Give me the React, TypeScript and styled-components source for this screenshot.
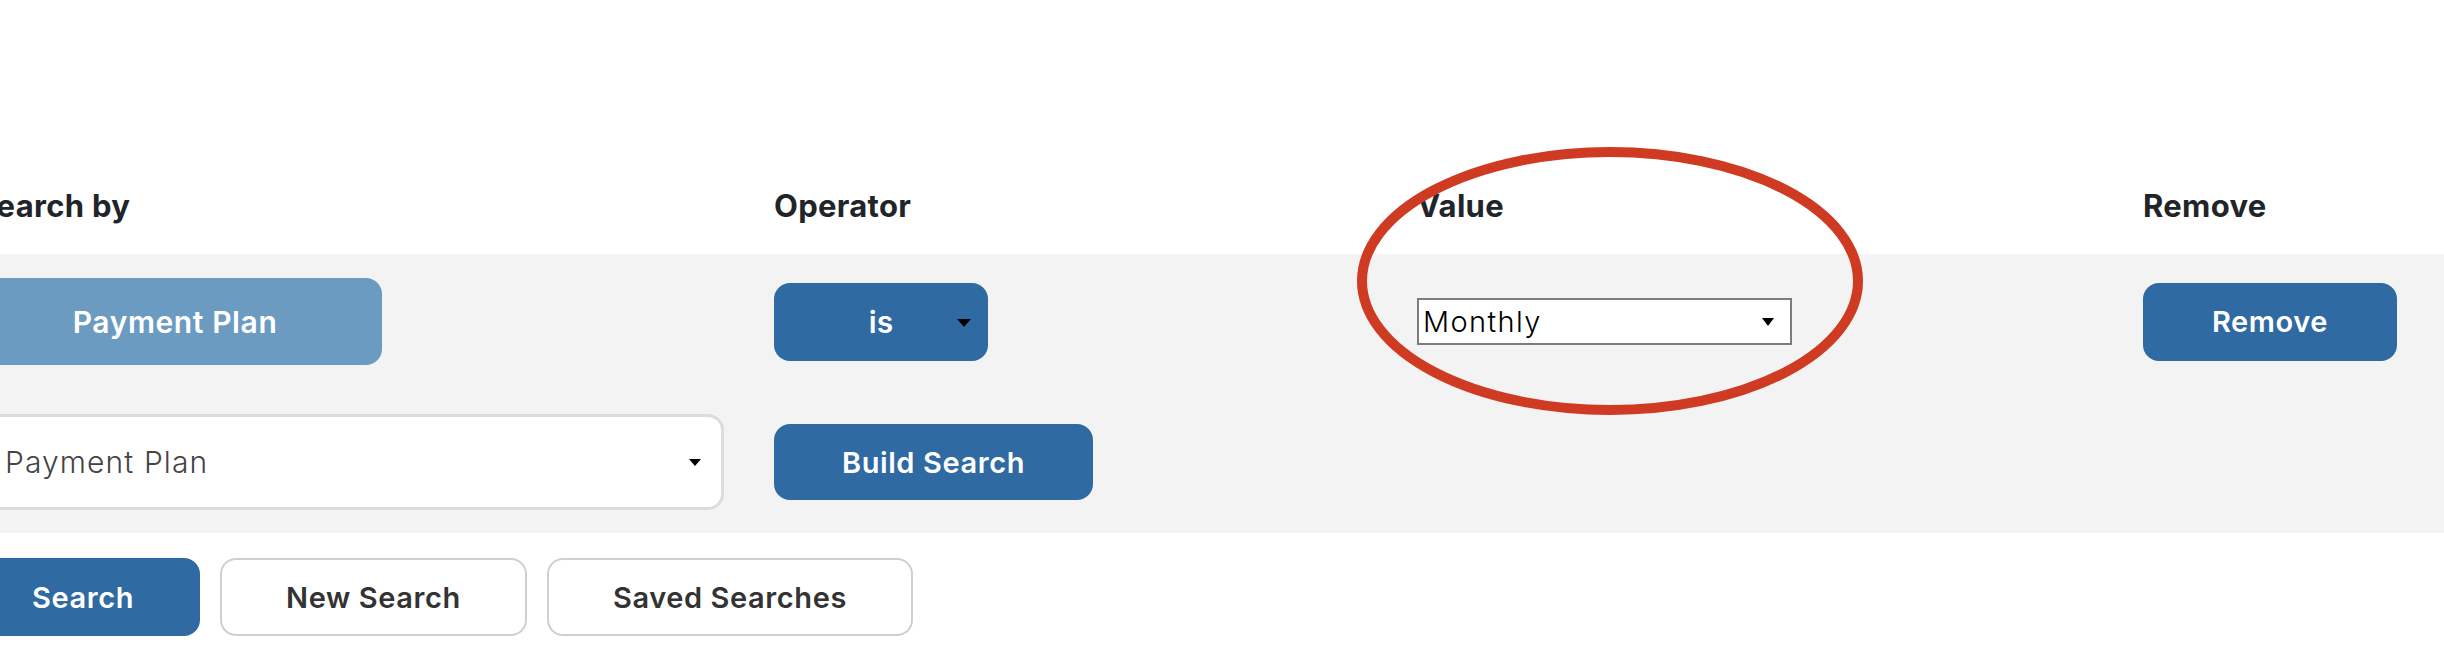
import React from "react";
import styled, { createGlobalStyle } from "styled-components";

const GlobalStyle = createGlobalStyle`
  html, body {
    margin: 0;
    padding: 0;
    background: #ffffff;
    overflow: hidden;
  }
  body {
    font-family: Inter, "Open Sans", "Liberation Sans", sans-serif;
    color: #212529;
  }
`;

const BLUE = "#306aa2";

const Page = styled.div`
  position: relative;
  width: 2444px;
  height: 670px;
  overflow: hidden;
`;

const Table = styled.div`
  margin-left: -32px;
`;

const Grid = styled.div`
  display: grid;
  grid-template-columns: 806px 643px 726px 1fr;
  align-items: center;
`;

const HeaderRow = styled(Grid)`
  height: 254px;
  align-items: end;
  box-sizing: border-box;
  padding-bottom: 33px;
`;

const HeaderCell = styled.div<{ $indent?: number }>`
  font-size: 31px;
  line-height: 31px;
  font-weight: 700;
  letter-spacing: 0.3px;
  color: #212529;
  padding-left: ${(p) => p.$indent ?? 0}px;
`;

const Band = styled.div`
  background: #f3f3f4;
  display: flex;
  flex-direction: column;
  gap: 49px;
  padding: 24px 0 23px;
  width: 2476px;
`;

const Row = styled(Grid)<{ $height: number }>`
  height: ${(p) => p.$height}px;
`;

const Button = styled.button<{ $variant?: "primary" | "muted" | "outline"; $height?: number }>`
  box-sizing: border-box;
  height: ${(p) => p.$height ?? 78}px;
  padding: 0 64px;
  border-radius: 16px;
  border: 2px solid
    ${(p) => (p.$variant === "outline" ? "#cfcfcf" : p.$variant === "muted" ? "#6b9bc0" : BLUE)};
  background: ${(p) => (p.$variant === "outline" ? "#ffffff" : p.$variant === "muted" ? "#6b9bc0" : BLUE)};
  color: ${(p) => (p.$variant === "outline" ? "#333333" : "#ffffff")};
  font-family: Inter, "Open Sans", sans-serif;
  font-size: 29px;
  font-weight: 600;
  letter-spacing: 0.6px;
  cursor: pointer;
  white-space: nowrap;
`;

const FieldButton = styled(Button)`
  width: 414px;
  font-size: 30px;
`;

const Caret = styled.span<{ $size?: number }>`
  width: 0;
  height: 0;
  border-left: ${(p) => (p.$size ?? 13) / 2}px solid transparent;
  border-right: ${(p) => (p.$size ?? 13) / 2}px solid transparent;
  border-top: ${(p) => Math.round((p.$size ?? 13) * 0.58)}px solid #000;
`;

const OperatorSelect = styled.div`
  position: relative;
  box-sizing: border-box;
  width: 214px;
  height: 78px;
  border-radius: 16px;
  background: ${BLUE};
  color: #ffffff;
  font-size: 30px;
  font-weight: 600;
  display: flex;
  align-items: center;
  justify-content: center;
  ${Caret} {
    position: absolute;
    right: 17px;
    top: 36px;
  }
`;

const ValueSelect = styled.div`
  box-sizing: border-box;
  width: 375px;
  height: 47px;
  border: 2px solid #7c7c7c;
  background: #ffffff;
  display: flex;
  align-items: center;
  justify-content: space-between;
  padding: 0 16px 0 4px;
  font-size: 29px;
  font-weight: 300;
  letter-spacing: 1.4px;
  color: #000;
`;

const FieldSelect = styled.div`
  box-sizing: border-box;
  width: 756px;
  height: 96px;
  border: 3px solid #dcdcdc;
  border-radius: 16px;
  background: #ffffff;
  display: flex;
  align-items: center;
  justify-content: space-between;
  padding: 0 20px 0 34px;
  font-size: 30px;
  font-weight: 300;
  letter-spacing: 1.1px;
  color: #444444;
`;

const Actions = styled.div`
  display: flex;
  gap: 20px;
  margin: 25px 0 0 -34px;
`;

const Annotation = styled.svg`
  position: absolute;
  left: 1352px;
  top: 142px;
  pointer-events: none;
`;

export default function App() {
  return (
    <Page>
      <GlobalStyle />
      <Table>
        <HeaderRow>
          <HeaderCell $indent={8}>Search by</HeaderCell>
          <HeaderCell>Operator</HeaderCell>
          <HeaderCell>Value</HeaderCell>
          <HeaderCell>Remove</HeaderCell>
        </HeaderRow>
        <Band>
          <Row $height={87}>
            <div>
              <FieldButton $variant="muted" $height={87}>
                Payment Plan
              </FieldButton>
            </div>
            <div>
              <OperatorSelect>
                is
                <Caret $size={14} />
              </OperatorSelect>
            </div>
            <div>
              <ValueSelect>
                Monthly
                <Caret $size={13} />
              </ValueSelect>
            </div>
            <div>
              <Button style={{ width: 254 }}>Remove</Button>
            </div>
          </Row>
          <Row $height={96}>
            <div>
              <FieldSelect>
                Payment Plan
                <Caret $size={12} />
              </FieldSelect>
            </div>
            <div>
              <Button $height={76} style={{ width: 319 }}>
                Build Search
              </Button>
            </div>
          </Row>
        </Band>
      </Table>
      <Actions>
        <Button>Search</Button>
        <Button $variant="outline">New Search</Button>
        <Button $variant="outline">Saved Searches</Button>
      </Actions>
      <Annotation width="516" height="278" viewBox="0 0 516 278">
        <ellipse cx="258" cy="139" rx="248" ry="129" fill="none" stroke="#cf3a22" strokeWidth="10" />
      </Annotation>
    </Page>
  );
}
